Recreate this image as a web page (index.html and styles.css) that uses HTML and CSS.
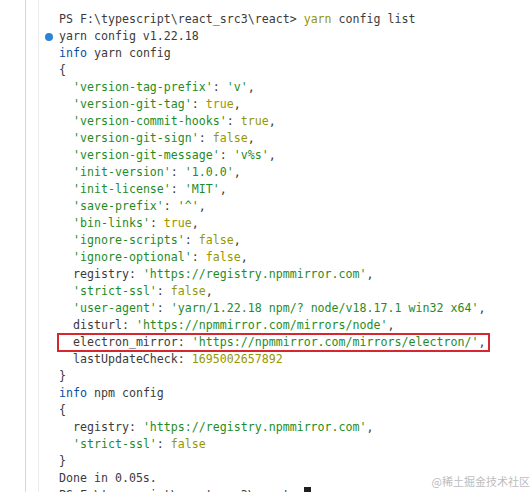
FILE: index.html
```html
<!DOCTYPE html>
<html>
<head>
<meta charset="utf-8">
<link rel="stylesheet" href="styles.css">
</head>
<body>
<div class="terminal">
  <div class="rail"></div>
  <div class="edge"></div>
  <div class="pane">
    <span class="mark"></span>
    <div class="out">
      <div class="ln">PS F:\typescript\react_src3\react&gt; <span class="y">yarn</span> config list</div>
      <div class="ln">yarn config v1.22.18</div>
      <div class="ln"><span class="b">info</span> yarn config</div>
      <div class="ln">{</div>
      <div class="ln">  <span class="g">'version-tag-prefix'</span>: <span class="g">'v'</span>,</div>
      <div class="ln">  <span class="g">'version-git-tag'</span>: <span class="y">true</span>,</div>
      <div class="ln">  <span class="g">'version-commit-hooks'</span>: <span class="y">true</span>,</div>
      <div class="ln">  <span class="g">'version-git-sign'</span>: <span class="y">false</span>,</div>
      <div class="ln">  <span class="g">'version-git-message'</span>: <span class="g">'v%s'</span>,</div>
      <div class="ln">  <span class="g">'init-version'</span>: <span class="g">'1.0.0'</span>,</div>
      <div class="ln">  <span class="g">'init-license'</span>: <span class="g">'MIT'</span>,</div>
      <div class="ln">  <span class="g">'save-prefix'</span>: <span class="g">'^'</span>,</div>
      <div class="ln">  <span class="g">'bin-links'</span>: <span class="y">true</span>,</div>
      <div class="ln">  <span class="g">'ignore-scripts'</span>: <span class="y">false</span>,</div>
      <div class="ln">  <span class="g">'ignore-optional'</span>: <span class="y">false</span>,</div>
      <div class="ln">  registry: <span class="g">'https://registry.npmmirror.com'</span>,</div>
      <div class="ln">  <span class="g">'strict-ssl'</span>: <span class="y">false</span>,</div>
      <div class="ln">  <span class="g">'user-agent'</span>: <span class="g">'yarn/1.22.18 npm/? node/v18.17.1 win32 x64'</span>,</div>
      <div class="ln">  disturl: <span class="g">'https://npmmirror.com/mirrors/node'</span>,</div>
      <div class="ln hl">  electron_mirror: <span class="g">'https://npmmirror.com/mirrors/electron/'</span>,</div>
      <div class="ln">  lastUpdateCheck: <span class="y">1695002657892</span></div>
      <div class="ln">}</div>
      <div class="ln"><span class="b">info</span> npm config</div>
      <div class="ln">{</div>
      <div class="ln">  registry: <span class="g">'https://registry.npmmirror.com'</span>,</div>
      <div class="ln">  <span class="g">'strict-ssl'</span>: <span class="y">false</span></div>
      <div class="ln">}</div>
      <div class="ln">Done in 0.05s.</div>
      <div class="ln">PS F:\typescript\react_src3\react&gt; <span class="cursor"></span></div>
    </div>
  </div>
</div>
<div class="watermark">@稀土掘金技术社区</div>
</body>
</html>
```
FILE: styles.css
```css
html, body {
  margin: 0;
  padding: 0;
  background: #ffffff;
}
body {
  width: 531px;
  height: 492px;
  overflow: hidden;
  position: relative;
}
.terminal {
  display: flex;
  height: 492px;
  overflow: hidden;
}
.rail {
  width: 25px;
  flex: none;
}
.edge {
  width: 12px;
  flex: none;
  border-left: 1px solid #d6d6d6;
}
.pane {
  position: relative;
  flex: 1;
  border-left: 1px solid #ececec;
  padding: 11px 0 0 20px;
}
.mark {
  position: absolute;
  left: 6px;
  top: 33px;
  width: 8px;
  height: 8px;
  border-radius: 50%;
  background: #2a84d8;
}
.out {
  font-family: "DejaVu Sans Mono", "Liberation Mono", monospace;
  font-size: 11.62px;
  line-height: 17px;
  color: #3b3b3b;
}
.ln {
  height: 17px;
  white-space: pre;
}
.y { color: #949800; }
.g { color: #1f8c1f; }
.b { color: #0451a5; }
.hl {
  width: fit-content;
  margin-left: -1px;
  padding: 0 4px 0 1px;
  outline: 2px solid #d7262e;
  outline-offset: -1px;
}
.cursor {
  display: inline-block;
  width: 7px;
  height: 15px;
  vertical-align: -3px;
  background: #1f1f1f;
}
.watermark {
  position: absolute;
  right: 1px;
  bottom: 3px;
  font-family: "Noto Sans CJK SC", sans-serif;
  font-size: 11px;
  color: #bdbdbd;
}
```
